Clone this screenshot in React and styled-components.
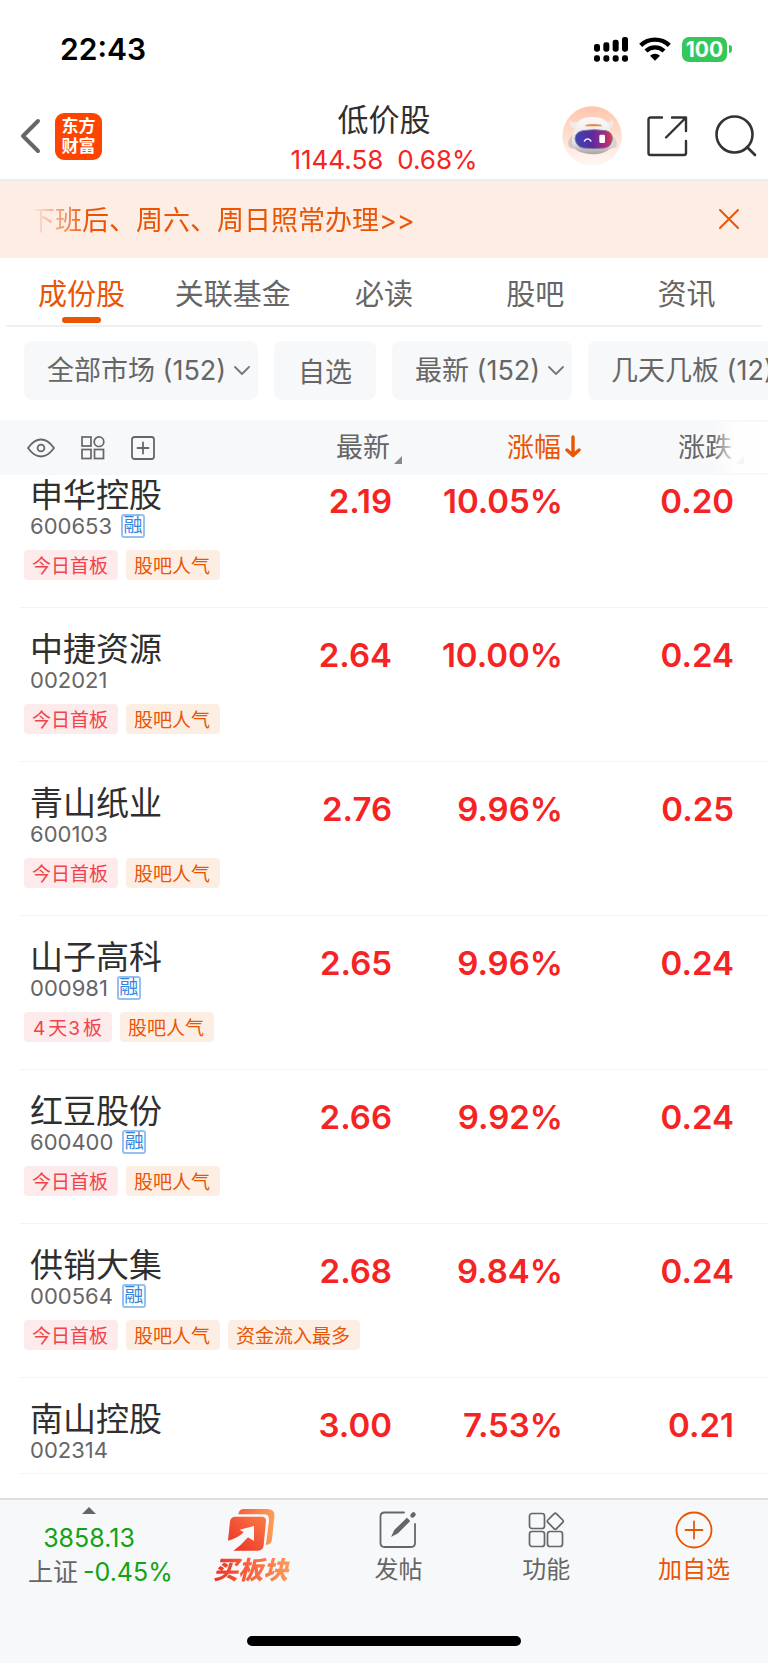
import React from "react";
import styled, { createGlobalStyle, css } from "styled-components";

const c = {
  orange: "#ea5504",
  red: "#f62323",
  green: "#12a312",
  ink: "#2f2f2f",
  grey: "#666666",
  panel: "#f7f8fa",
};

const GlobalStyle = createGlobalStyle`
  *, *::before, *::after { box-sizing: border-box; }
  body {
    margin: 0;
    background: #fff;
    color: ${c.ink};
    font-family: Inter, "Noto Sans CJK SC", sans-serif;
  }
  button, select {
    font: inherit;
    color: inherit;
    background: none;
    border: 0;
    margin: 0;
    padding: 0;
    cursor: pointer;
  }
  svg { display: block; }
`;

const Page = styled.div`
  min-height: 100vh;
  display: flex;
  flex-direction: column;
  overflow-x: hidden;
`;

/* Status bar */
const StatusBar = styled.div`
  height: 92px;
  padding: 6px 36px 0 60px;
  display: flex;
  align-items: center;
  justify-content: space-between;
  color: #000;
`;
const Clock = styled.time`
  font-size: 30px;
  font-weight: 600;
`;
const StatusIcons = styled.div`
  display: flex;
  align-items: center;
  gap: 11px;
`;
const Battery = styled.div`
  display: flex;
  align-items: center;
  gap: 2px;
`;
const BatteryLevel = styled.span`
  width: 45px;
  height: 25px;
  border-radius: 7px;
  background: #34c759;
  color: #fff;
  font-size: 21px;
  font-weight: 700;
  line-height: 25px;
  text-align: center;
`;
const BatteryTip = styled.span`
  width: 3px;
  height: 8px;
  border-radius: 0 3px 3px 0;
  background: #34c759;
`;

/* Header */
const Header = styled.header`
  height: 89px;
  padding: 0 11px 2px;
  border-bottom: 2px solid #ebedf0;
  display: grid;
  grid-template-columns: minmax(0, 1fr) auto minmax(0, 1fr);
  align-items: center;
`;
const HeaderSide = styled.div`
  display: flex;
  align-items: center;
  gap: ${(p) => (p.$end ? 24 : 13)}px;
  padding-left: ${(p) => (p.$end ? 0 : 9)}px;
  justify-content: ${(p) => (p.$end ? "flex-end" : "flex-start")};
`;
const IconButton = styled.button`
  display: flex;
  align-items: center;
  justify-content: center;
  flex: none;
`;
const Logo = styled.div`
  width: 47px;
  height: 47px;
  border-radius: 9px;
  background: #ff4400;
  color: #fff;
  font-size: 17px;
  font-weight: 700;
  line-height: 20px;
  text-align: center;
  padding: 3px 6px 0;
`;
const TitleBlock = styled.div`
  padding-top: 7px;
  text-align: center;
`;
const Title = styled.h1`
  margin: 0;
  font-size: 31px;
  font-weight: 400;
  line-height: 41px;
`;
const Quote = styled.p`
  margin: 0;
  display: flex;
  justify-content: center;
  gap: 14px;
  font-size: 26px;
  line-height: 40px;
  color: ${c.red};
`;

/* Banner */
const Banner = styled.div`
  height: 77px;
  padding: 0 28px 2px;
  display: flex;
  align-items: center;
  justify-content: space-between;
  background: #fdede5;
  color: ${c.orange};
`;
const BannerLink = styled.a`
  color: inherit;
  text-decoration: none;
  font-size: 27px;
  white-space: nowrap;
  mask-image: linear-gradient(90deg, transparent 4px, #000 60px);
`;

/* Tabs */
const Tabs = styled.nav`
  margin: 0 6px;
  height: 69px;
  border-bottom: 2px solid #eeeff1;
  display: grid;
  grid-template-columns: repeat(5, 1fr);
`;
const Tab = styled.button`
  display: flex;
  flex-direction: column;
  align-items: center;
  justify-content: flex-end;
  && { padding-bottom: 2px; }
  font-size: 29px;
  line-height: 44px;
  white-space: nowrap;
  color: ${(p) => (p.$active ? c.orange : c.grey)};
  &::after {
    content: "";
    width: 39px;
    height: 6px;
    border-radius: 3px;
    background: ${(p) => (p.$active ? c.orange : "transparent")};
  }
`;

/* Filters */
const Filters = styled.div`
  display: flex;
  gap: 16px;
  padding: 14px 0 20px 24px;
  overflow: hidden;
`;
const chip = css`
  flex: none;
  height: 59px;
  border-radius: 8px;
  background: ${c.panel};
  color: ${c.grey};
  font-size: 27px;
`;
const ChipButton = styled.button`
  ${chip}
  && { padding: 0 24px; background: ${c.panel}; }
`;
const ChipLabel = styled.label`
  ${chip}
  display: grid;
  align-items: center;
  & > * { grid-area: 1 / 1; }
  & > svg { justify-self: end; margin-right: 8px; pointer-events: none; }
`;
const ChipSelect = styled.select`
  appearance: none;
  height: 59px;
  && { padding: 0 31px 0 23px; }
`;

/* Stock table */
const Table = styled.table`
  display: block;
`;
const Head = styled.thead`
  display: block;
  position: relative;
  z-index: 1;
  background: ${c.panel};
  &::after {
    content: "";
    position: absolute;
    top: 2px;
    bottom: 2px;
    right: 0;
    width: 56px;
    background: linear-gradient(90deg, rgba(255, 255, 255, 0), rgba(255, 255, 255, 0.9) 24px, #fff);
    pointer-events: none;
  }
`;
const columns = css`
  display: grid;
  grid-template-columns: minmax(0, 201fr) repeat(3, minmax(0, 171fr));
  margin-left: 20px;
  padding-right: 34px;
`;
const HeadRow = styled.tr`
  ${columns}
  height: 55px;
  align-items: center;
`;
const HeadTools = styled.th`
  display: flex;
  align-items: center;
  gap: 26px;
  padding: 0 0 0 7px;
  color: ${c.grey};
`;
const HeadCell = styled.th`
  padding: 0 2px 0 0;
  text-align: right;
  font-weight: 400;
`;
const SortButton = styled.button`
  position: relative;
  font-size: 27px;
  line-height: 40px;
  color: ${(p) => (p.$active ? c.orange : c.grey)};
  & > svg {
    position: absolute;
    left: calc(100% + 4px);
    bottom: ${(p) => (p.$active ? 10 : 3)}px;
  }
`;
const Body = styled.tbody`
  display: block;
  margin-top: -21px;
`;
const Row = styled.tr`
  ${columns}
  border-bottom: 1px solid #f3f4f6;
`;
const StockCell = styled.td`
  padding: 21px 0 11px 4px;
`;
const Name = styled.div`
  height: 39px;
  padding-left: 6px;
  font-size: 33px;
  line-height: 40px;
  white-space: nowrap;
`;
const Code = styled.div`
  display: flex;
  align-items: center;
  gap: 9px;
  height: 24px;
  padding-left: 6px;
  font-size: 22px;
  color: ${c.grey};
`;
const Margin = styled.span`
  width: 24px;
  height: 24px;
  border: 2px solid #94c0f2;
  border-radius: 3px;
  color: #3585e0;
  font-size: 19px;
  line-height: 20px;
  display: flex;
  justify-content: center;
`;
const Tags = styled.div`
  display: flex;
  gap: 8px;
  padding: 12px 0 16px;
`;
const Tag = styled.span`
  flex: none;
  height: 30px;
  padding: 2px 10px 0 8px;
  border-radius: 4px;
  font-size: 19px;
  line-height: 30px;
  white-space: nowrap;
  color: ${(p) => (p.$hot ? "#f0434a" : c.orange)};
  background: ${(p) => (p.$hot ? "#fdeaeb" : "#fdeee4")};
`;
const Count = styled.span`
  margin: 0 3px 0 1px;
`;
const Figure = styled.td`
  padding: 27px 0 0;
  text-align: right;
  font-size: 33px;
  font-weight: 600;
  line-height: 40px;
  color: ${c.red};
`;

/* Bottom bar */
const Footer = styled.footer`
  margin-top: auto;
  height: 165px;
  padding-bottom: 17px;
  border-top: 2px solid #dddfe2;
  background: ${c.panel};
  display: flex;
  flex-direction: column;
  justify-content: space-between;
  align-items: center;
`;
const Actions = styled.div`
  width: 100%;
  display: grid;
  grid-template-columns: 177fr 148fr 148fr 148fr 148fr;
`;
const IndexButton = styled.button`
  display: flex;
  flex-direction: column;
  align-items: flex-start;
  && { padding: 7px 0 0 28px; }
  font-size: 25px;
  line-height: 34px;
  white-space: nowrap;
`;
const IndexTop = styled.span`
  width: 122px;
  display: flex;
  flex-direction: column;
  align-items: center;
  gap: 6px;
  color: ${c.green};
`;
const IndexChange = styled.span`
  display: flex;
  gap: 5px;
  color: ${c.grey};
  & > b { font-weight: 400; color: ${c.green}; }
`;
const Action = styled.button`
  display: flex;
  flex-direction: column;
  align-items: center;
  && { padding-top: 7px; }
  font-size: 24px;
  line-height: 34px;
  white-space: nowrap;
  color: ${(p) => (p.$accent ? c.orange : c.grey)};
`;
const ActionIcon = styled.span`
  height: 46px;
  display: flex;
  align-items: center;
`;
const PromoLabel = styled.span`
  font-size: 25px;
  font-weight: 900;
  font-style: italic;
  padding: 0 4px;
  background: linear-gradient(90deg, #ee2a24, #ff9d5c);
  background-clip: text;
  color: transparent;
`;
const HomeBar = styled.div`
  width: 274px;
  height: 10px;
  border-radius: 5px;
  background: #000;
`;

const Signal = () => (
  <svg width="34" height="25" viewBox="0 0 102 75">
    {[23, 28, 36, 44].map((h, i) => (
      <g key={h}>
        <rect x={i * 28} y={44 - h} width="18" height={h} rx="7" />
        <rect x={i * 28} y="55" width="18" height="19" rx="7" />
      </g>
    ))}
  </svg>
);
const Wifi = () => (
  <svg width="32" height="24" viewBox="0 0 96 72" fill="none" stroke="#000" strokeWidth="13">
    <path d="M5 25 A62 62 0 0 1 91 25" />
    <path d="M21 42 A39 39 0 0 1 75 42" />
    <path d="M48 71 L33 56 A22 22 0 0 1 63 56 Z" fill="#000" stroke="none" />
  </svg>
);
const Back = () => (
  <svg width="22" height="36" viewBox="0 0 22 36" fill="none" stroke="#666" strokeWidth="4" strokeLinecap="round" strokeLinejoin="round">
    <path d="M18 3 L3 18 L18 33" />
  </svg>
);
const Robot = () => (
  <svg width="60" height="60" viewBox="0 0 180 180">
    <defs>
      <linearGradient id="halo" x1="0" y1="0" x2="0" y2="1">
        <stop offset="0" stopColor="#ffc5ab" />
        <stop offset="1" stopColor="#fff8f5" />
      </linearGradient>
      <linearGradient id="shell" x1="0" y1="0" x2="0" y2="1">
        <stop offset="0" stopColor="#fbfafa" />
        <stop offset="0.7" stopColor="#e6e1e3" />
        <stop offset="1" stopColor="#a8a0a6" />
      </linearGradient>
      <linearGradient id="visor" x1="0" y1="0" x2="1" y2="0">
        <stop offset="0" stopColor="#3a46b8" />
        <stop offset="0.45" stopColor="#5a2aa0" />
        <stop offset="0.8" stopColor="#a82a80" />
        <stop offset="1" stopColor="#d0404c" />
      </linearGradient>
    </defs>
    <circle cx="90" cy="90" r="89" fill="url(#halo)" />
    <path d="M22 38 Q26 52 46 48 L44 68 Q18 64 22 38 Z" fill="#f2eae8" />
    <path d="M152 38 Q148 52 130 48 L134 68 Q160 64 152 38 Z" fill="#f2eae8" />
    <path d="M34 84 Q14 104 20 120 Q26 130 42 128 Z" fill="#cfc8cb" />
    <path d="M146 84 Q170 104 164 120 Q158 130 140 128 Z" fill="#d9d2d4" />
    <path d="M38 70 Q42 44 66 36 Q90 30 116 36 Q140 44 144 72 Q156 92 152 114 Q144 138 108 144 Q84 147 56 139 Q34 132 30 112 Q28 90 38 70 Z" fill="url(#shell)" />
    <path d="M72 56 Q94 52 117 56 L120 61 H70 Z" fill="#e88a40" />
    <path d="M62 74 Q96 68 132 74 Q151 78 151 98 Q149 122 128 126 Q96 130 64 126 Q42 122 39 98 Q40 78 62 74 Z" fill="url(#visor)" stroke="#8a7c92" strokeWidth="3" />
    <path d="M67 105 Q77 92 87 105" fill="none" stroke="#fff" strokeWidth="4" strokeLinecap="round" />
    <rect x="112" y="86" width="17" height="25" rx="4" fill="#fff" />
  </svg>
);
const Share = () => (
  <svg width="42" height="42" viewBox="0 0 42 42" fill="none" stroke="#333" strokeWidth="2.4" strokeLinecap="round" strokeLinejoin="round">
    <path d="M16 2.5 H4.5 Q2.5 2.5 2.5 4.5 V38 Q2.5 40 4.5 40 H38 Q40 40 40 38 V26" />
    <path d="M26 2.5 H40 V16 M40 2.5 L20 22.5" />
  </svg>
);
const Search = () => (
  <svg width="45" height="43" viewBox="-2 0 45 43" fill="none" stroke="#333" strokeWidth="2.6" strokeLinecap="round">
    <circle cx="20.5" cy="19.5" r="18" />
    <path d="M33 32 L41 40" />
  </svg>
);
const Close = () => (
  <svg width="22" height="22" viewBox="0 0 22 22" fill="none" stroke={c.orange} strokeWidth="2" strokeLinecap="round">
    <path d="M2 2 L20 20 M20 2 L2 20" />
  </svg>
);
const Chevron = () => (
  <svg width="16" height="10" viewBox="0 0 16 10" fill="none" stroke="#777" strokeWidth="1.8" strokeLinecap="round" strokeLinejoin="round">
    <path d="M1 1 L8 8 L15 1" />
  </svg>
);
const Eye = () => (
  <svg width="28" height="24" viewBox="0 0 28 24" fill="none" stroke="currentColor" strokeWidth="1.8" strokeLinejoin="round">
    <path d="M1 12 Q7 3.5 14 3.5 Q21 3.5 27 12 Q21 20.5 14 20.5 Q7 20.5 1 12 Z" />
    <circle cx="14" cy="12" r="3.4" />
  </svg>
);
const Grid = () => (
  <svg width="24" height="24" viewBox="0 0 24 24" fill="none" stroke="currentColor" strokeWidth="1.7">
    <rect x="1" y="1" width="9" height="9" />
    <circle cx="18" cy="5.7" r="4.8" />
    <rect x="1" y="13.5" width="9" height="9" />
    <rect x="13.5" y="13.5" width="9" height="9" />
  </svg>
);
const PlusBox = () => (
  <svg width="24" height="24" viewBox="0 0 24 24" fill="none" stroke="currentColor" strokeWidth="1.8" strokeLinecap="round">
    <rect x="1" y="1" width="22" height="22" rx="2.5" />
    <path d="M12 6.5 V17.5 M6.5 12 H17.5" />
  </svg>
);
const Corner = () => (
  <svg width="9" height="9" viewBox="0 0 9 9" fill="#888a90">
    <path d="M8 0 V8 H0 Z" />
  </svg>
);
const ArrowDown = () => (
  <svg width="16" height="23" viewBox="0 0 16 23" fill="none" stroke={c.orange} strokeWidth="3.4" strokeLinecap="round" strokeLinejoin="round">
    <path d="M8 2 V20 M2 15 L8 20.5 L14 15" />
  </svg>
);
const TriangleUp = () => (
  <svg width="14" height="8" viewBox="0 0 14 8" fill="#666">
    <path d="M7 0 L14 7 H0 Z" />
  </svg>
);
const Boards = () => (
  <svg width="50" height="44" viewBox="678 84 150 132">
    <defs>
      <linearGradient id="cardBack" x1="0" y1="0" x2="1" y2="0">
        <stop offset="0" stopColor="#f4613d" />
        <stop offset="1" stopColor="#ff9d55" />
      </linearGradient>
      <linearGradient id="cardFront" x1="0" y1="1" x2="1" y2="0">
        <stop offset="0" stopColor="#ec2c26" />
        <stop offset="1" stopColor="#fb7c46" />
      </linearGradient>
    </defs>
    <path fill="url(#cardBack)" d="M715 103 Q717 87 732 87 H802 Q825 87 823 110 L816 178 Q814 195 797 195 Q799 188 800 178 L807 122 Q809 103 792 103 Z" />
    <path fill="url(#cardFront)" d="M690 124 Q692 110 706 110 H785 Q799 110 798 124 L791 196 Q789 212 774 212 H700 Q724 196 744 172 L762 183 V138 L719 149 L731 157 Q712 176 684 182 Z" />
  </svg>
);
const Compose = () => (
  <svg width="40" height="40" viewBox="0 0 40 40" fill="none" stroke="#666" strokeWidth="1.8" strokeLinecap="round">
    <path d="M26 2.5 H6.5 Q2.500 2.500 2.500 6.500 V33 Q2.500 37 6.500 37 H33 Q37 37 37 33 V14" />
    <path d="M29 9 L17 20.500 L15 25 L19.500 22.500 L31 11 Z" fill="#666" />
    <path d="M34.500 5.500 L35.500 4.500" strokeWidth="4.500" />
  </svg>
);
const Features = () => (
  <svg width="40" height="40" viewBox="0 0 40 40" fill="none" stroke="#666" strokeWidth="1.7" strokeLinejoin="round">
    <rect x="3.5" y="3.5" width="15" height="15" rx="2.5" />
    <rect x="3.5" y="21.5" width="15" height="15" rx="2.5" />
    <rect x="21.5" y="21.5" width="15" height="15" rx="2.5" />
    <path d="M28 3.8 Q29.3 2.6 30.6 3.8 L36.7 10 Q37.9 11.2 36.7 12.4 L30.6 18.6 Q29.3 19.8 28 18.6 L21.9 12.4 Q20.7 11.2 21.9 10 Z" />
  </svg>
);
const AddCircle = () => (
  <svg width="40" height="40" viewBox="0 0 40 40" fill="none" stroke={c.orange} strokeWidth="1.8" strokeLinecap="round">
    <circle cx="20" cy="20" r="17.5" />
    <path d="M20 11.5 V28.5 M11.5 20 H28.5" />
  </svg>
);

const tabs = ["成份股", "关联基金", "必读", "股吧", "资讯"];
const first = "今日首板";
const popular = "股吧人气";
const streak = <><Count>4</Count>天<Count>3</Count>板</>;
const stocks = [
  ["申华控股", "600653", true, "2.19", "10.05%", "0.20", [first, popular]],
  ["中捷资源", "002021", false, "2.64", "10.00%", "0.24", [first, popular]],
  ["青山纸业", "600103", false, "2.76", "9.96%", "0.25", [first, popular]],
  ["山子高科", "000981", true, "2.65", "9.96%", "0.24", [streak, popular]],
  ["红豆股份", "600400", true, "2.66", "9.92%", "0.24", [first, popular]],
  ["供销大集", "000564", true, "2.68", "9.84%", "0.24", [first, popular, "资金流入最多"]],
  ["南山控股", "002314", false, "3.00", "7.53%", "0.21", []],
];

function FilterSelect({ name, text }) {
  return (
    <ChipLabel>
      <ChipSelect aria-label={name}>
        <option>{text}</option>
      </ChipSelect>
      <Chevron />
    </ChipLabel>
  );
}

export default function App() {
  return (
    <Page>
      <GlobalStyle />
      <StatusBar>
        <Clock>22:43</Clock>
        <StatusIcons>
          <Signal />
          <Wifi />
          <Battery>
            <BatteryLevel>100</BatteryLevel>
            <BatteryTip />
          </Battery>
        </StatusIcons>
      </StatusBar>

      <Header>
        <HeaderSide>
          <IconButton aria-label="返回"><Back /></IconButton>
          <Logo>东方<br />财富</Logo>
        </HeaderSide>
        <TitleBlock>
          <Title>低价股</Title>
          <Quote><span>1144.58</span><span>0.68%</span></Quote>
        </TitleBlock>
        <HeaderSide $end>
          <IconButton aria-label="智能助手"><Robot /></IconButton>
          <IconButton aria-label="分享"><Share /></IconButton>
          <IconButton aria-label="搜索"><Search /></IconButton>
        </HeaderSide>
      </Header>

      <Banner>
        <BannerLink href="#notice">下班后、周六、周日照常办理&gt;&gt;</BannerLink>
        <IconButton aria-label="关闭"><Close /></IconButton>
      </Banner>

      <Tabs>
        {tabs.map((t, i) => (
          <Tab key={t} $active={i === 0}>{t}</Tab>
        ))}
      </Tabs>

      <Filters>
        <FilterSelect name="市场" text="全部市场 (152)" />
        <ChipButton>自选</ChipButton>
        <FilterSelect name="时间" text="最新 (152)" />
        <FilterSelect name="连板" text="几天几板 (12)" />
      </Filters>

      <Table>
        <Head>
          <HeadRow>
            <HeadTools>
              <IconButton aria-label="显示"><Eye /></IconButton>
              <IconButton aria-label="布局"><Grid /></IconButton>
              <IconButton aria-label="添加"><PlusBox /></IconButton>
            </HeadTools>
            <HeadCell><SortButton>最新<Corner /></SortButton></HeadCell>
            <HeadCell><SortButton $active>涨幅<ArrowDown /></SortButton></HeadCell>
            <HeadCell><SortButton>涨跌<Corner /></SortButton></HeadCell>
          </HeadRow>
        </Head>
        <Body>
          {stocks.map(([name, code, margin, price, pct, diff, tags]) => (
            <Row key={code}>
              <StockCell>
                <Name>{name}</Name>
                <Code>{code}{margin && <Margin>融</Margin>}</Code>
                {tags.length > 0 && (
                  <Tags>
                    {tags.map((t, i) => <Tag key={i} $hot={i === 0}>{t}</Tag>)}
                  </Tags>
                )}
              </StockCell>
              <Figure>{price}</Figure>
              <Figure>{pct}</Figure>
              <Figure>{diff}</Figure>
            </Row>
          ))}
        </Body>
      </Table>

      <Footer>
        <Actions>
          <IndexButton>
            <IndexTop><TriangleUp />3858.13</IndexTop>
            <IndexChange>上证<b>-0.45%</b></IndexChange>
          </IndexButton>
          <Action><ActionIcon><Boards /></ActionIcon><PromoLabel>买板块</PromoLabel></Action>
          <Action><ActionIcon><Compose /></ActionIcon>发帖</Action>
          <Action><ActionIcon><Features /></ActionIcon>功能</Action>
          <Action $accent><ActionIcon><AddCircle /></ActionIcon>加自选</Action>
        </Actions>
        <HomeBar />
      </Footer>
    </Page>
  );
}
